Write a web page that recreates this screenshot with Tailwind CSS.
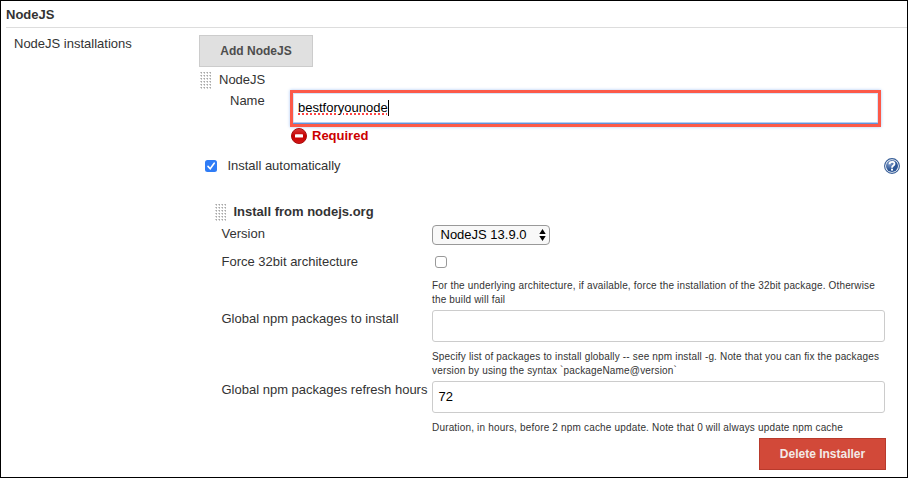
<!DOCTYPE html>
<html lang="en">
<head>
<meta charset="utf-8">
<title>NodeJS installations</title>
<script src="https://cdn.jsdelivr.net/npm/@tailwindcss/browser@4"></script>
</head>
<body class="bg-white">
<main class="flex h-[478px] w-[908px] flex-col overflow-hidden border border-black bg-white font-['Liberation_Sans',Arial,sans-serif] text-[13px] leading-4 text-[#333]">
  <h1 class="ml-[5px] h-[27px] shrink-0 border-b border-[#ddd] pt-[6px] font-bold">NodeJS</h1>
  <div class="flex">
    <div class="w-[198px] shrink-0 pt-2 pl-[13px]">NodeJS installations</div>
    <div class="flex w-[708px] flex-col">
      <button class="mt-[7px] h-8 w-[114px] border border-[#ccc] bg-[#e0e0e0] text-[12px] font-bold text-[#4d4d4d]">Add NodeJS</button>

      <div class="flex h-[23px] pt-[5px]">
        <svg class="ml-px h-[18px] w-[12px]" viewBox="0 0 12 18"><defs><pattern id="grip" width="3" height="3" patternUnits="userSpaceOnUse"><path d="M1 0h1v1H1z" fill="#a8a8a8"/><path d="M0 0h1v1H0zM1 1h1v1H1z" fill="#ccc"/></pattern></defs><rect width="12" height="18" fill="url(#grip)"/></svg>
        <span class="ml-[7px]">NodeJS</span>
      </div>

      <div class="flex h-[37px]">
        <label for="name" class="w-[60px] pt-[3px]"><span class="ml-[31px]">Name</span></label>
        <div class="ml-[31px] flex h-[37px] w-[591px] items-center border-[3px] border-[#fc5948] pb-[2px] pl-[5px] text-black shadow-[0_0_3px_#a9c8f5,inset_0_-1px_0_#5f92dc,inset_0_-2px_0_#b5cdf2,inset_0_0_0_1px_#d7e4f8]">
          <span class="underline decoration-[#f44] decoration-dotted decoration-2 underline-offset-2">bestforyounode</span><span class="h-4 w-px bg-black"></span>
        </div>
      </div>

      <div class="flex h-[23px] pt-px pl-[92px]">
        <svg class="h-4 w-4" viewBox="0 0 16 16"><defs><linearGradient id="stop" x1="0" y1="0" x2="0" y2="1"><stop stop-color="#dc3b3b"/><stop offset=".5" stop-color="#c40000"/><stop offset="1" stop-color="#d51717"/></linearGradient></defs><circle cx="8" cy="8" r="7.5" fill="url(#stop)" stroke="#a80e0e"/><rect x="4" y="6.3" width="8" height="3.2" rx=".6" fill="#fff"/></svg>
        <strong class="ml-[5px] text-[#c00]">Required</strong>
      </div>

      <div class="flex h-[54px] pt-2">
        <svg class="mt-[2px] ml-[6px] h-3 w-3" viewBox="0 0 12 12"><rect width="12" height="12" rx="2.5" fill="#2f7cf6"/><path d="M3 6.4 5.2 8.7 9.2 3.2" fill="none" stroke="#fff" stroke-width="1.6" stroke-linecap="round"/></svg>
        <span class="ml-[10.5px] w-[656.5px] tracking-[-0.02px]">Install automatically</span>
        <svg class="h-4 w-4" viewBox="0 0 16 16"><defs><radialGradient id="help" cx=".3" cy=".3"><stop stop-color="#85a0cb"/><stop offset="1" stop-color="#2d5797"/></radialGradient></defs><circle cx="8" cy="8" r="7.4" fill="#fff" stroke="#365d97" stroke-width="1.1"/><circle cx="8" cy="8" r="6" fill="url(#help)"/><path d="M5.5 6.2C5.5 3 10.6 3 10.5 6 10.5 7.6 8 7.6 8 9.7" fill="none" stroke="#fff" stroke-width="1.8"/><rect x="7" y="10.7" width="2" height="1.9" fill="#fff"/></svg>
      </div>

      <div class="flex h-[21px] pl-4">
        <svg class="h-[18px] w-[12px]" viewBox="0 0 12 18"><rect width="12" height="18" fill="url(#grip)"/></svg>
        <strong class="ml-[6.5px]">Install from nodejs.org</strong>
      </div>

      <div class="grid grid-cols-[210px_454px] grid-rows-[28px_57px_71px_57px] pl-[23px]">
        <label class="-ml-[0.5px] pt-px">Version</label>
        <div class="flex h-5 w-[118px] items-center justify-between rounded-[4px] border border-[#999] bg-[#f8f8f8] pr-[3px] pl-[7.5px] text-black">
          <span>NodeJS 13.9.0</span>
          <svg class="h-[12px] w-[7px]" viewBox="0 0 7 12"><path d="M3.5 0 6.7 5H.3zM3.5 12 .3 7h6.4z"/></svg>
        </div>

        <label class="-ml-[0.5px] pt-px">Force 32bit architecture</label>
        <div>
          <div class="mt-[3px] ml-[3px] h-3 w-3 rounded-[3px] border border-[#999]"></div>
          <p class="mt-[11px] text-[10px] leading-[14px] tracking-[0.165px] whitespace-nowrap">For the underlying architecture, if available, force the installation of the 32bit package. Otherwise<br>the build will fail</p>
        </div>

        <label class="-ml-[0.5px] pt-px">Global npm packages to install</label>
        <div>
          <div class="h-8 w-[453px] rounded-[3px] border border-[#ccc]"></div>
          <p class="mt-2 text-[10px] leading-[14px] tracking-[0.165px] whitespace-nowrap">Specify list of packages to install globally -- see npm install -g. Note that you can fix the packages<br>version by using the syntax `packageName@version`</p>
        </div>

        <label class="-ml-[0.5px] pt-px whitespace-nowrap">Global npm packages refresh hours</label>
        <div>
          <div class="flex h-8 w-[453px] items-center rounded-[3px] border border-[#ccc] pl-[5.5px] text-black">72</div>
          <p class="mt-2 text-[10px] leading-[14px] tracking-[0.175px] whitespace-nowrap">Duration, in hours, before 2 npm cache update. Note that 0 will always update npm cache</p>
        </div>
      </div>
      <button class="ml-[560px] h-8 w-[127px] border border-[#b83a2c] bg-[#d24939] text-[12px] font-bold text-[#f3e9e7]">Delete Installer</button>
    </div>
  </div>
</main>
</body>
</html>
